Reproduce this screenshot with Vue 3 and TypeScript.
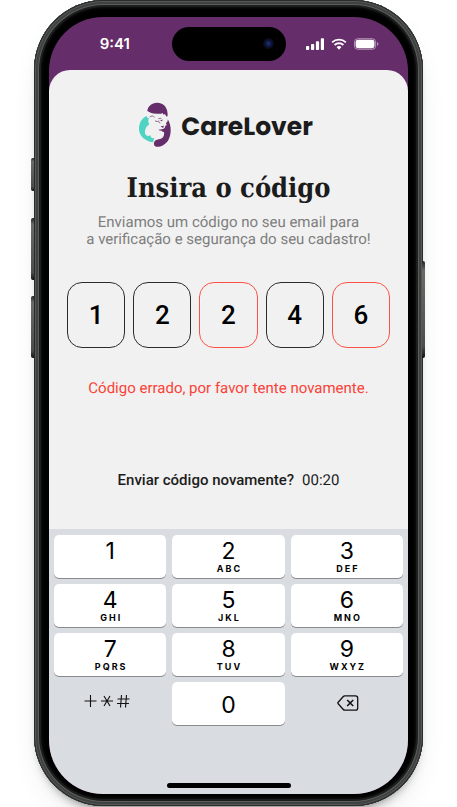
<script setup lang="ts">
import { ref } from 'vue'

interface CodeDigit {
  value: string
  wrong: boolean
}

interface PadKey {
  digit: string
  letters: string
}

const code = ref<CodeDigit[]>([
  { value: '1', wrong: false },
  { value: '2', wrong: false },
  { value: '2', wrong: true },
  { value: '4', wrong: false },
  { value: '6', wrong: true },
])

const keys: PadKey[] = [
  { digit: '1', letters: '' },
  { digit: '2', letters: 'ABC' },
  { digit: '3', letters: 'DEF' },
  { digit: '4', letters: 'GHI' },
  { digit: '5', letters: 'JKL' },
  { digit: '6', letters: 'MNO' },
  { digit: '7', letters: 'PQRS' },
  { digit: '8', letters: 'TUV' },
  { digit: '9', letters: 'WXYZ' },
]

function press(digit: string): void {
  const next = code.value.find((item) => item.value === '')
  if (next) next.value = digit
}

function erase(): void {
  const filled = code.value.filter((item) => item.value !== '')
  const last = filled[filled.length - 1]
  if (last) {
    last.value = ''
    last.wrong = false
  }
}
</script>

<template>
  <div class="stage">
    <div class="phone">
      <span class="side silent"></span>
      <span class="side volume-up"></span>
      <span class="side volume-down"></span>
      <span class="side power"></span>

      <div class="screen">
        <header class="status">
          <span class="time">9:41</span>
          <span class="island"><span class="lens"></span></span>
          <span class="indicators">
            <svg class="signal" viewBox="0 0 18 12" aria-hidden="true">
              <rect x="0" y="8" width="3.200" height="4" rx="0.8" />
              <rect x="5" y="6" width="3.200" height="6" rx="0.8" />
              <rect x="9.900" y="3.3" width="3.200" height="8.7" rx="0.8" />
              <rect x="14.800" y="0.3" width="3.200" height="11.7" rx="0.8" />
            </svg>
            <svg class="wifi" viewBox="0 0 17 12" aria-hidden="true">
              <path d="M1.2 4.3a10.6 10.6 0 0 1 14.6 0" />
              <path d="M3.8 7a6.9 6.9 0 0 1 9.4 0" />
              <path class="dot" d="M8.5 12 5.9 9.3a3.8 3.8 0 0 1 5.2 0z" />
            </svg>
            <svg class="battery" viewBox="0 0 26 12" aria-hidden="true">
              <rect class="shell" x="0.5" y="0.5" width="22" height="11" rx="3.4" />
              <rect x="1.700" y="1.700" width="19.600" height="8.600" rx="2.4" />
              <path class="tip" d="M24 4v4c.9-.3 1.4-1.1 1.4-2S24.900 4.300 24 4z" />
            </svg>
          </span>
        </header>

        <main class="card">
          <div class="brand">
            <svg class="logo" viewBox="0 0 120 156" aria-hidden="true">
              <path
                class="plum"
                d="M37 39C38 25 50 14 66 14c21 0 33 16 32 38-1 5-3 5-5 1-2-4-5-5-8-3l-2-5c-6 4-12 2-19 2-11 0-20-3-27-8z"
              />
              <path
                class="mint"
                d="M36 54C21 59 12 74 12 92c0 20 15 36 42 41l4-13c-6 2-11-1-12-8-10 5-18-1-16-12 1-9 5-16 13-21-4-5-4-13-1-18-5-1-7-3-6-7z"
              />
              <path
                class="plum"
                d="M98 64c12 17 12 48 1 64-9 13-24 20-36 18-5-2-7-7-6-12 2-6 7-9 14-10 12-2 18-9 16-23-3 2-6 1-5-3-4 1-9 0-12-3 8 0 15-2 19-5l2-7 4-1-2-7c4-2 6-5 5-11z"
              />
              <path class="line" d="M44 57c5-4 11-4 15 1M70 62l9-1M60 68c4 3 8 3 13 1M71 73l5 2" />
              <path class="plum" d="M75 66l9-1-4 5zM77 85l10-2-3 7z" />
            </svg>
            <span class="name">CareLover</span>
          </div>

          <h1 class="title">Insira o código</h1>
          <p class="lead">
            Enviamos um código no seu email para<br />a verificação e segurança do seu cadastro!
          </p>

          <div class="code" role="group" aria-label="Código de verificação">
            <input
              v-for="(item, i) in code"
              :key="i"
              v-model="item.value"
              class="cell"
              :class="{ wrong: item.wrong }"
              type="text"
              inputmode="numeric"
              maxlength="1"
              :aria-label="'Dígito ' + (i + 1)"
              :aria-invalid="item.wrong"
            />
          </div>

          <p class="error" role="alert">Código errado, por favor tente novamente.</p>
          <p class="resend">
            <button class="resend-button" type="button">Enviar código novamente?</button>
            <span>00:20</span>
          </p>
        </main>

        <section class="keyboard">
          <div class="keys">
            <button v-for="key in keys" :key="key.digit" class="key" type="button" @click="press(key.digit)">
              <span class="digit">{{ key.digit }}</span>
              <span v-if="key.letters" class="letters">{{ key.letters }}</span>
            </button>
            <button class="key plain symbols-key" type="button" aria-label="Símbolos">
              <svg class="symbols" viewBox="0 0 46 14" aria-hidden="true">
                <path d="M0.500 7h12M6.500 1v12" />
                <path d="M17 7h12M20 2l6 10M26 2l-6 10" />
                <path d="M33.500 5h12M33 9.500h12M37.500 1l-1 12.500M42.500 1l-1 12.500" />
              </svg>
            </button>
            <button class="key zero" type="button" @click="press('0')">
              <span class="digit">0</span>
            </button>
            <button class="key plain delete-key" type="button" aria-label="Apagar" @click="erase">
              <svg class="delete" viewBox="0 0 22 16" aria-hidden="true">
                <path d="M7.800 0.800h10.700a2.200 2.200 0 0 1 2.200 2.200v10a2.200 2.200 0 0 1-2.200 2.200H7.800a2 2 0 0 1-1.500-.7L1.200 8.700a1 1 0 0 1 0-1.400l5.100-5.800a2 2 0 0 1 1.500-.7z" />
                <path class="cross" d="M10.200 5l6 6M16.200 5l-6 6" />
              </svg>
            </button>
          </div>
          <div class="home"></div>
        </section>
      </div>
    </div>
  </div>
</template>

<style>
body {
  background: #fff;
}
</style>

<style scoped>
* {
  box-sizing: border-box;
}

.stage {
  padding: 0 34px;
  overflow: hidden;
  font-family: Roboto, "Liberation Sans", sans-serif;
  color: #1c1c1c;
  text-rendering: geometricPrecision;
}

.phone {
  position: relative;
  padding: 17px 15px 12px;
  margin-bottom: 1px;
  border-radius: 70px;
  background: #000;
  box-shadow:
    inset 0 0 0 1px #2a2c2b,
    inset 0 0 0 2px #555856,
    inset 0 0 0 4px #3f4140,
    inset 0 0 0 5px #5b5d5c,
    inset 0 0 0 7px #1d1e1e,
    inset 0 0 3px 8px #111,
    0 8px 12px -8px rgba(0, 0, 0, 0.6),
    0 16px 40px -24px rgba(0, 0, 0, 0.3);
}

.side {
  position: absolute;
  left: -3px;
  width: 3px;
  border-radius: 2px 0 0 2px;
  background: linear-gradient(#222, #6a6a66 10%, #4c4d4b 88%, #111);
}

.silent {
  top: 158px;
  height: 33px;
}

.volume-up {
  top: 218px;
  height: 62px;
}

.volume-down {
  top: 296px;
  height: 62px;
}

.power {
  top: 261px;
  right: -2px;
  left: auto;
  height: 97px;
  border-radius: 0 2px 2px 0;
}

.screen {
  overflow: hidden;
  border-radius: 54px;
  background: #652d69;
}

.status {
  display: grid;
  grid-template-columns: 1fr 114px 1fr;
  align-items: center;
  height: 53px;
  color: #fff;
}

.time {
  padding-left: 9px;
  font: 600 15px/20px Inter, sans-serif;
  text-align: center;
}

.island {
  display: flex;
  align-items: center;
  justify-content: flex-end;
  height: 34px;
  padding-right: 12px;
  border-radius: 17px;
  background: #000;
}

.lens {
  width: 11px;
  height: 11px;
  border-radius: 50%;
  background: radial-gradient(circle, #1c2a6c 0 15%, #0e1434 40%, #080914 70%);
}

.indicators {
  display: flex;
  align-items: center;
  gap: 7px;
  padding-left: 20px;
}

.indicators svg {
  height: 12px;
  fill: #fff;
}

.signal {
  width: 18px;
}

.wifi {
  width: 16px;
}

.wifi path {
  fill: none;
  stroke: #fff;
  stroke-width: 2;
}

.wifi .dot {
  fill: #fff;
  stroke: none;
}

.battery {
  width: 25px;
}

.battery .shell {
  fill: none;
  stroke: #fff;
  stroke-opacity: 0.5;
}

.battery .tip {
  fill-opacity: 0.5;
}

.card {
  padding: 28px 18px 40px;
  border-radius: 21px 21px 0 0;
  background: #f1f1f1;
  text-align: center;
}

.brand {
  display: flex;
  align-items: center;
  justify-content: center;
  gap: 6px;
  padding-right: 9px;
}

.logo {
  width: 40px;
  height: 52px;
}

.plum {
  fill: #652d69;
}

.mint {
  fill: #4fd3c2;
}

.line {
  fill: none;
  stroke: #652d69;
  stroke-width: 2;
}

.name {
  padding-top: 5px;
  font: 700 25px/32px Poppins, Inter, sans-serif;
}

.title {
  margin: 20px 0 6px;
  font: 700 27px/38px "Roboto Slab", "DejaVu Serif Condensed", "DejaVu Serif", serif;
}

.lead,
.error,
.resend {
  margin: 0;
  font-size: 15px;
  line-height: 18px;
}

.lead {
  color: #7e7e7e;
  line-height: 17px;
}

.code {
  display: flex;
  gap: 8px;
  margin: 34px 0 31px;
}

.cell {
  flex: 1;
  min-width: 0;
  height: 66px;
  padding: 0;
  border: 1px solid #2b2b2b;
  border-radius: 15px;
  background: transparent;
  color: #000;
  font: 500 26px/32px Roboto, sans-serif;
  text-align: center;
}

.cell.wrong {
  border-color: #fb5147;
}

.error {
  color: #fa4338;
}

.resend {
  display: flex;
  justify-content: center;
  gap: 8px;
  margin-top: 74px;
}

.resend-button {
  padding: 0;
  border: 0;
  background: none;
  color: inherit;
  font: 500 15px/18px Roboto, sans-serif;
}

.keyboard {
  padding: 6px 5px;
  background: #d9dce1;
}

.keys {
  display: grid;
  grid-template-columns: repeat(3, 1fr);
  gap: 6px;
}

.key {
  display: flex;
  flex-direction: column;
  align-items: center;
  height: 43px;
  padding: 4px 0 0;
  border: 0;
  border-radius: 5px;
  background: #fff;
  box-shadow: 0 1px 0 #898a8d;
  color: #000;
  font-family: Inter, sans-serif;
}

.digit {
  font-size: 23px;
  line-height: 25px;
}

.letters {
  padding-left: 2px;
  font-size: 9px;
  font-weight: 700;
  line-height: 10px;
  letter-spacing: 2px;
}

.zero,
.plain {
  justify-content: center;
}

.plain {
  background: none;
  box-shadow: none;
}

.symbols-key {
  padding: 0 6px 6px 0;
}

.delete-key {
  padding: 0 0 2px 2px;
}

.symbols {
  width: 46px;
  height: 14px;
  fill: none;
  stroke: #111;
  stroke-width: 1.100;
}

.delete {
  width: 22px;
  height: 16px;
  fill: none;
  stroke: #111;
  stroke-width: 1.300;
}

.delete .cross {
  stroke-width: 1.600;
}

.home {
  width: 124px;
  height: 5px;
  margin: 58px auto 0;
  border-radius: 3px;
  background: #000;
}
</style>
